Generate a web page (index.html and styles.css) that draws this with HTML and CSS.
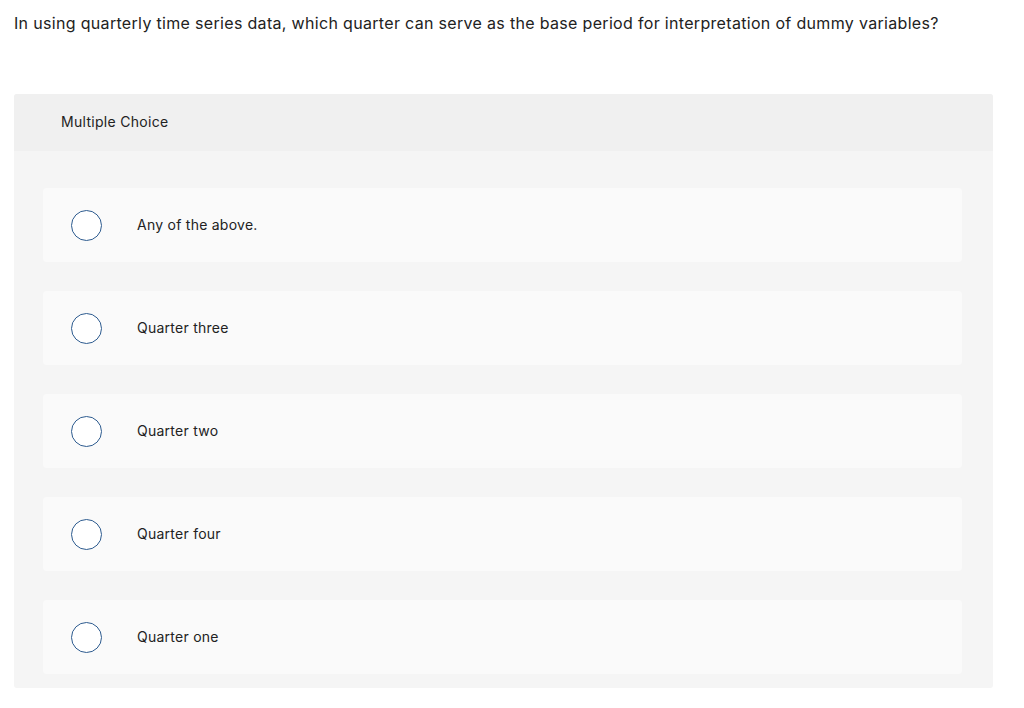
FILE: index.html
```html
<!DOCTYPE html>
<html>
<head>
<meta charset="utf-8">
<link rel="stylesheet" href="styles.css">
</head>
<body>
<div class="question">In using quarterly time series data, which quarter can serve as the base period for interpretation of dummy variables?</div>
<div class="panel">
  <div class="panel-head">Multiple Choice</div>
  <div class="panel-body">
    <div class="option"><span class="radio"></span><span class="label">Any of the above.</span></div>
    <div class="option"><span class="radio"></span><span class="label">Quarter three</span></div>
    <div class="option"><span class="radio"></span><span class="label">Quarter two</span></div>
    <div class="option"><span class="radio"></span><span class="label">Quarter four</span></div>
    <div class="option"><span class="radio"></span><span class="label">Quarter one</span></div>
  </div>
</div>
</body>
</html>
```
FILE: styles.css
```css
html, body { margin: 0; padding: 0; background: #fff; }
body {
  font-family: Inter, "Open Sans", "Liberation Sans", sans-serif;
  color: #222;
  width: 1024px;
}
.question {
  padding: 12px 14px 0 14px;
  font-size: 16px;
  letter-spacing: 0.32px;
  line-height: 22px;
  height: 82px;
  box-sizing: border-box;
  color: #222;
}
.panel {
  margin: 12px 31px 0 14px;
  background: #f5f5f5;
  border-radius: 3px;
}
.panel-head {
  height: 57px;
  box-sizing: border-box;
  padding: 19px 0 0 47px;
  font-size: 14px;
  letter-spacing: 0.3px;
  line-height: 18px;
  background: #f0f0f0;
  border-radius: 3px 3px 0 0;
  color: #222;
}
.panel-body {
  padding: 37px 31px 14px 29px;
  display: flex;
  flex-direction: column;
  gap: 29px;
}
.option {
  height: 74px;
  background: #fafafa;
  border-radius: 4px;
  display: flex;
  align-items: center;
  padding-left: 28px;
}
.radio {
  width: 29px;
  height: 29px;
  border: 1.5px solid #2d5b8f;
  border-radius: 50%;
  background: #fff;
  flex: none;
}
.label {
  margin-left: 35px;
  margin-top: -1px;
  font-size: 14px;
  letter-spacing: 0.25px;
  color: #222;
}
```
